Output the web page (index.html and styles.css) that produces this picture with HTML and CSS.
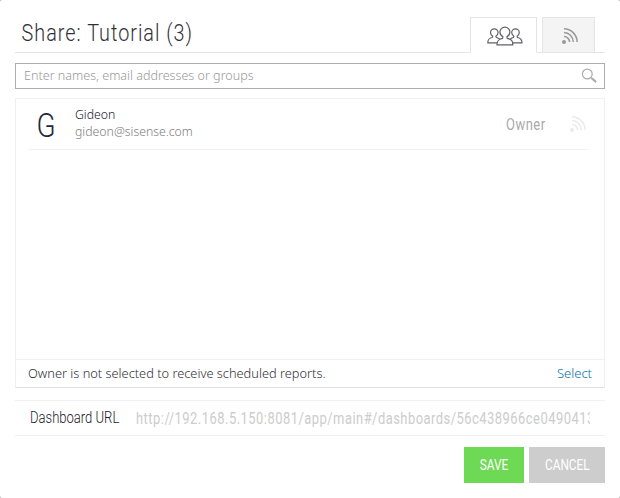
FILE: index.html
```html
<!DOCTYPE html>
<html lang="en">
<head>
<meta charset="utf-8">
<title>Share: Tutorial (3)</title>
<link rel="stylesheet" href="styles.css">
</head>
<body>
<main class="dialog">
  <header class="head">
    <h1 class="title cond">Share: Tutorial (3)</h1>
    <nav class="tabs">
      <div class="tab active">
        <svg class="people" width="36" height="20" viewBox="0 0 36 20" fill="#fff" stroke="#606168" stroke-width="1.200">
          <path d="M.8 16.900c0-3.500 1-4.700 4.400-5.400l.5-1.300C4.300 9.300 3.500 8 3.500 6.600a3.800 3.800 0 0 1 7.600 0c0 1.400-.8 2.700-2.200 3.600l.5 1.300c3 .7 4.700 2 4.700 5.400z"/>
          <path d="M21.700 16.900c0-3.500 1.400-4.700 4.700-5.400l.5-1.300c-1.400-.9-2.200-2.200-2.200-3.600a3.800 3.800 0 0 1 7.600 0c0 1.400-.8 2.700-2.200 3.600l.5 1.300c3.200.7 4.400 1.900 4.400 5.400z"/>
          <path d="M10 18.800c0-4 1.300-5.500 5.500-6.400l.4-1.500c-2-1.100-3-2.800-3-4.800a5 5 0 0 1 10 0c0 2-1 3.700-3 4.800l.4 1.500c4.300.9 5.500 2.400 5.500 6.400z"/>
        </svg>
      </div>
      <div class="tab">
        <svg class="feed" width="18" height="18" viewBox="0 0 18 18" fill="none" stroke="currentColor" stroke-width="1.500"><circle cx="3" cy="15" r="2" fill="currentColor" stroke="none"/><path d="M3 9.500c3 0 5.500 2.500 5.500 5.500M3 5.500c5 0 9.200 4.200 9.200 9.500M3 1.700c7 0 13.100 6 13.100 13.300"/></svg>
      </div>
    </nav>
  </header>
  <div class="search">
    <span class="hum placeholder">Enter names, email addresses or groups</span>
    <svg width="17" height="17" viewBox="0 0 17 17" fill="none" stroke="#adadad"><circle cx="6.300" cy="6" r="4.900" stroke-width="1.200"/><path d="M9.800 9.500l1.400 1.200" stroke-width="1.200"/><path d="M10.800 10.300l4.300 3.800" stroke-width="2.200"/></svg>
  </div>
  <section class="list">
    <div class="rows">
      <div class="row">
        <span class="avatar cond">G</span>
        <div class="person">
          <span class="name hum">Gideon</span>
          <span class="email hum">gideon@sisense.com</span>
        </div>
        <span class="role cond">Owner</span>
        <svg class="feed muted" width="18" height="18" viewBox="0 0 18 18" fill="none" stroke="currentColor" stroke-width="1.500"><circle cx="3" cy="15" r="2" fill="currentColor" stroke="none"/><path d="M3 9.500c3 0 5.500 2.500 5.500 5.500M3 5.500c5 0 9.200 4.200 9.200 9.500M3 1.700c7 0 13.100 6 13.100 13.300"/></svg>
      </div>
    </div>
    <div class="note">
      <span class="hum msg">Owner is not selected to receive scheduled reports.</span>
      <a class="hum select">Select</a>
    </div>
  </section>
  <section class="url">
    <span class="label cond">Dashboard URL</span>
    <div class="clip"><span class="address cond">http://192.168.5.150:8081/app/main#/dashboards/56c438966ce0490413</span></div>
  </section>
  <footer class="actions">
    <div class="btn save"><span class="cond">SAVE</span></div>
    <div class="btn cancel"><span class="cond">CANCEL</span></div>
  </footer>
</main>
</body>
</html>
```
FILE: styles.css
```css
* { box-sizing: border-box; }
body { margin: 0; background: #a8a8a8; }
.dialog {
  width: 620px; height: 498px; padding: 17px 15px 0;
  background: #fff; border-radius: 2px; overflow: hidden;
}
.cond, .hum { display: inline-block; white-space: nowrap; transform-origin: 0 50%; }
.cond { font-family: Roboto, sans-serif; font-weight: 300; }
.hum { font-family: "Noto Sans", "Open Sans", sans-serif; font-size: 13px; font-weight: 300; }
.head { display: flex; justify-content: space-between; height: 36px; border-bottom: 1px solid #e4e4e4; }
.title {
  margin: 0; padding-left: 8px; font-size: 24px; line-height: 32px;
  letter-spacing: 1.2px; color: #303039; transform: scaleX(.826);
}
.tabs { display: flex; gap: 5px; height: 36px; padding-right: 10px; }
.tab {
  display: flex; align-items: center; justify-content: center;
  width: 53px; height: 36px; border: 1px solid #e4e4e4; background: #f4f4f4; color: #999;
}
.tab.active { width: 67px; border-bottom-color: #fff; background: #fff; }
.people { margin-left: 2px; margin-top: 1px; }
.tab .feed { margin: 2px 0 0 2px; }
.search {
  display: flex; align-items: center; justify-content: space-between;
  height: 26px; margin-top: 10px; padding: 0 6px 2px 8px; border: 1px solid #adadad;
}
.search svg { margin-top: 2px; }
.placeholder { color: #999; transform: scaleX(.966); }
.list { display: flex; flex-direction: column; height: 290px; margin-top: 9px; border: 1px solid #f0f0f0; border-bottom-color: #e0e0e0; }
.rows { flex: 1; padding: 0 17px 0 13px; }
.row { display: flex; height: 51px; margin-right: -1px; padding-right: 1px; border-bottom: 1px solid #f0f0f0; }
.avatar { width: 46px; padding-left: 9px; font-size: 34px; line-height: 52px; color: #26263a; transform: scaleX(.82); }
.person { flex: 1; display: flex; flex-direction: column; padding-top: 7px; line-height: 17px; }
.name { color: #202029; transform: scaleX(.94); }
.email { color: #808080; transform: scaleX(.944); }
.role { width: 63px; font-size: 16px; line-height: 52px; letter-spacing: .6px; color: #aaa; font-weight: 400; transform: scaleX(.81); }
.muted { margin-top: 16px; color: #ebebeb; }
.note { display: flex; justify-content: space-between; height: 28px; padding: 0 12px; border-top: 1px solid #f0f0f0; line-height: 27px; color: #303039; }
.msg { transform: scaleX(.985); }
.select { color: #0074a8; transform-origin: 100% 50%; }
.url { display: flex; height: 36px; margin-top: 12px; padding: 0 15px; border: solid #f0f0f0; border-width: 1px 0; line-height: 34px; font-size: 16px; }
.label { width: 106px; color: #202029; transform: scaleX(.815); }
.clip { width: 455px; line-height: 36px; overflow: hidden; }
.address { color: #ccc; font-weight: 400; letter-spacing: .6px; transform: scaleX(.808); }
.actions { display: flex; justify-content: flex-end; gap: 5px; margin-top: 11px; }
.btn { display: flex; align-items: center; justify-content: center; height: 36px; color: #fff; font-size: 15px; }
.btn .cond { font-weight: 400; transform: scaleX(.79); transform-origin: 50% 50%; }
.save { width: 60px; background: #6dd955; }
.cancel { width: 76px; background: #cdcdcd; }
```
